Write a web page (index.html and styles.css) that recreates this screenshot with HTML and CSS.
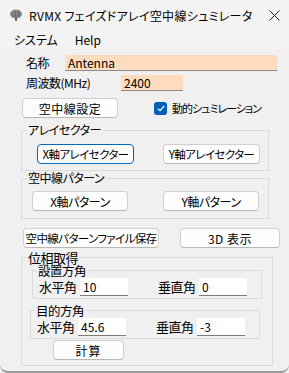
FILE: index.html
```html
<!DOCTYPE html>
<html lang="ja">

<head>
  <meta charset="UTF-8" />
  <title>RVMX フェイズドアレイ空中線シュミレータ</title>
  <link rel="stylesheet" href="styles.css">
</head>

<body>
  <div class="window">
    <div class="titlebar">
      <svg class="app-icon" width="14" height="12" viewBox="0 0 14 12">
        <ellipse cx="7" cy="5" rx="6" ry="4.5" fill="#8a8a8a" />
        <path d="M3 3 L5 8 M6 2 L7 9 M9 2 L9 8 M11 3 L10 7" stroke="#5c5c5c" stroke-width="0.8" />
        <rect x="6" y="9" width="2" height="3" fill="#6a6a6a" />
      </svg>
      <span class="title">RVMX フェイズドアレイ空中線シュミレータ</span>
      <svg class="close" width="11" height="11" viewBox="0 0 11 11">
        <path d="M0.5 0.5 L10.5 10.5 M10.5 0.5 L0.5 10.5" stroke="#1a1a1a" stroke-width="1" />
      </svg>
    </div>

    <div class="menubar">
      <span class="menu-item">システム</span>
      <span class="menu-item">Help</span>
    </div>

    <div class="client">
      <div class="row row-name">
        <span class="lbl lbl-name">名称</span>
        <div class="field peach field-name">Antenna</div>
      </div>
      <div class="row row-freq">
        <span class="lbl lbl-freq">周波数(MHz)</span>
        <div class="field peach field-freq">2400</div>
      </div>
      <div class="row row-setup">
        <div class="btn btn-setup" role="button">空中線設定</div>
        <label class="check">
          <span class="check-box">
            <svg width="8" height="7" viewBox="0 0 8 7">
              <path d="M0.8 3.6 L3 5.7 L7.2 1" fill="none" stroke="#fff" stroke-width="1.2" />
            </svg>
          </span>
          <span class="check-text">動的シュミレーション</span>
        </label>
      </div>

      <fieldset class="group group-array">
        <legend>アレイセクター</legend>
        <div class="btn-pair">
          <div class="btn focused" role="button">X軸アレイセクター</div>
          <div class="btn" role="button">Y軸アレイセクター</div>
        </div>
      </fieldset>

      <fieldset class="group group-pattern">
        <legend>空中線パターン</legend>
        <div class="btn-pair pattern-pair">
          <div class="btn" role="button">X軸パターン</div>
          <div class="btn" role="button">Y軸パターン</div>
        </div>
      </fieldset>

      <div class="row row-save">
        <div class="btn btn-save" role="button">空中線パターンファイル保存</div>
        <div class="btn btn-3d" role="button">3D 表示</div>
      </div>

      <fieldset class="group group-phase">
        <legend>位相取得</legend>

        <fieldset class="group sub sub-install">
          <legend>設置方角</legend>
          <div class="angle-row">
            <span class="lbl-angle">水平角</span>
            <div class="field white field-angle">10</div>
            <span class="lbl-angle lbl-vert">垂直角</span>
            <div class="field white field-angle">0</div>
          </div>
        </fieldset>

        <fieldset class="group sub sub-target">
          <legend>目的方角</legend>
          <div class="angle-row">
            <span class="lbl-angle">水平角</span>
            <div class="field white field-angle">45.6</div>
            <span class="lbl-angle lbl-vert">垂直角</span>
            <div class="field white field-angle">-3</div>
          </div>
        </fieldset>

        <div class="btn btn-calc" role="button">計算</div>
      </fieldset>
    </div>
  </div>
</body>

</html>
```

FILE: styles.css
```css
* {
  margin: 0;
  padding: 0;
  box-sizing: border-box;
}

body {
  margin: 0;
  background-color: #f0f0f0;
  font-family: "Noto Sans CJK JP", "Noto Sans", sans-serif;
  font-feature-settings: "palt";
  font-size: 12px;
  color: #000;
}

.window {
  width: 289px;
  height: 373px;
  background-color: #f0f0f0;
  border-bottom: 2px solid #9a9a9a;
  border-radius: 0 0 8px 8px;
  overflow: hidden;
}

/* title bar */
.titlebar {
  height: 30px;
  background-color: #f3f3f3;
  display: flex;
  align-items: center;
  padding-left: 9px;
}

.app-icon {
  margin-right: 6px;
}

.title {
  font-size: 12px;
  letter-spacing: 0.3px;
  flex: 1;
}

.close {
  margin-right: 9px;
}

/* menu bar */
.menubar {
  height: 19px;
  background-color: #f3f3f3;
  display: flex;
  align-items: center;
  padding-left: 14px;
  gap: 17px;
}

.menu-item {
  font-size: 12px;
  line-height: 19px;
}

/* client area */
.client {
  padding-top: 5px;
  letter-spacing: -0.5px;
}

.row {
  display: flex;
  align-items: center;
}

.lbl {
  font-size: 12px;
  padding-left: 26px;
  flex-shrink: 0;
  white-space: nowrap;
}

.lbl-name {
  width: 65px;
}

.lbl-freq {
  width: 121px;
}

.field {
  height: 16px;
  font-size: 12px;
  line-height: 16px;
  padding-left: 3px;
  letter-spacing: 0;
  border-bottom: 1px solid #8a8a8a;
}

.peach {
  background-color: #fedcbd;
}

.white {
  background-color: #fff;
}

.field-name {
  width: 212px;
}

.row-freq {
  margin-top: 3px;
}

.field-freq {
  width: 62px;
}

.row-setup {
  margin-top: 7px;
}

/* buttons */
.btn {
  height: 20px;
  min-width: 0;
  flex-shrink: 0;
  display: flex;
  align-items: center;
  justify-content: center;
  overflow: hidden;
  white-space: nowrap;
  font-size: 12px;
  letter-spacing: -0.5px;
  background-color: #fdfdfd;
  border: 1px solid #d0d0d0;
  border-bottom-color: #b8b8b8;
  border-radius: 4px;
  cursor: default;
}

.btn.focused {
  border: 1.5px solid #0067c0;
}

.btn-setup {
  margin-left: 22px;
  width: 96px;
  letter-spacing: 0.5px;
}

.check {
  margin-left: 36px;
  display: flex;
  align-items: center;
  gap: 5px;
}

.check-text {
  font-size: 11px;
  letter-spacing: -1px;
  white-space: nowrap;
}

.check-box {
  width: 13px;
  height: 13px;
  border-radius: 3px;
  background-color: #005fb8;
  display: flex;
  align-items: center;
  justify-content: center;
}

/* group boxes */
.group {
  border: 1px solid #dcdcdc;
  margin-left: 21px;
  width: 248px;
}

.group legend {
  font-size: 12px;
  line-height: 14px;
  padding: 0 1px;
  margin-left: 5px;
  white-space: nowrap;
}

.group-array {
  margin-top: 5px;
  padding: 7px 0 6px;
}

.btn-pair {
  display: grid;
  grid-template-columns: 97px 97px;
  column-gap: 29px;
  padding-left: 15px;
}

.btn-pair .btn {
  font-size: 11.5px;
  letter-spacing: -0.6px;
}

.group-pattern {
  padding: 6px 0 7px;
}

.pattern-pair {
  grid-template-columns: 96px 96px;
  column-gap: 35px;
  padding-left: 10px;
}

.pattern-pair .btn {
  font-size: 12px;
  letter-spacing: -0.5px;
}

.row-save {
  margin-top: 9px;
}

.btn-save {
  margin-left: 23px;
  width: 136px;
  font-size: 11.5px;
  letter-spacing: -0.6px;
}

.btn-3d {
  margin-left: 21px;
  width: 100px;
  letter-spacing: 0.5px;
}

.group-phase {
  margin-top: 3px;
  width: 252px;
  padding: 0 0 5px;
}

.group-phase > legend {
  font-size: 13px;
  line-height: 13px;
}

.sub {
  margin-left: 10px;
  width: 230px;
  padding: 1px 0 2px;
}

.sub legend {
  font-size: 12.5px;
  line-height: 13px;
  margin-left: 4px;
}

.sub-target {
  margin-top: 5px;
  margin-left: 8px;
}

.angle-row {
  display: flex;
  align-items: center;
  padding-left: 6px;
}

.lbl-angle {
  font-size: 13px;
  line-height: 16px;
  width: 41px;
  white-space: nowrap;
}

.lbl-vert {
  margin-left: 30px;
}

.field-angle {
  height: 18px;
  line-height: 18px;
  width: 48px;
  border-bottom-color: #7a7a7a;
}

.btn-calc {
  margin: 1px 0 0 31px;
  width: 71px;
  letter-spacing: 1px;
}
```
